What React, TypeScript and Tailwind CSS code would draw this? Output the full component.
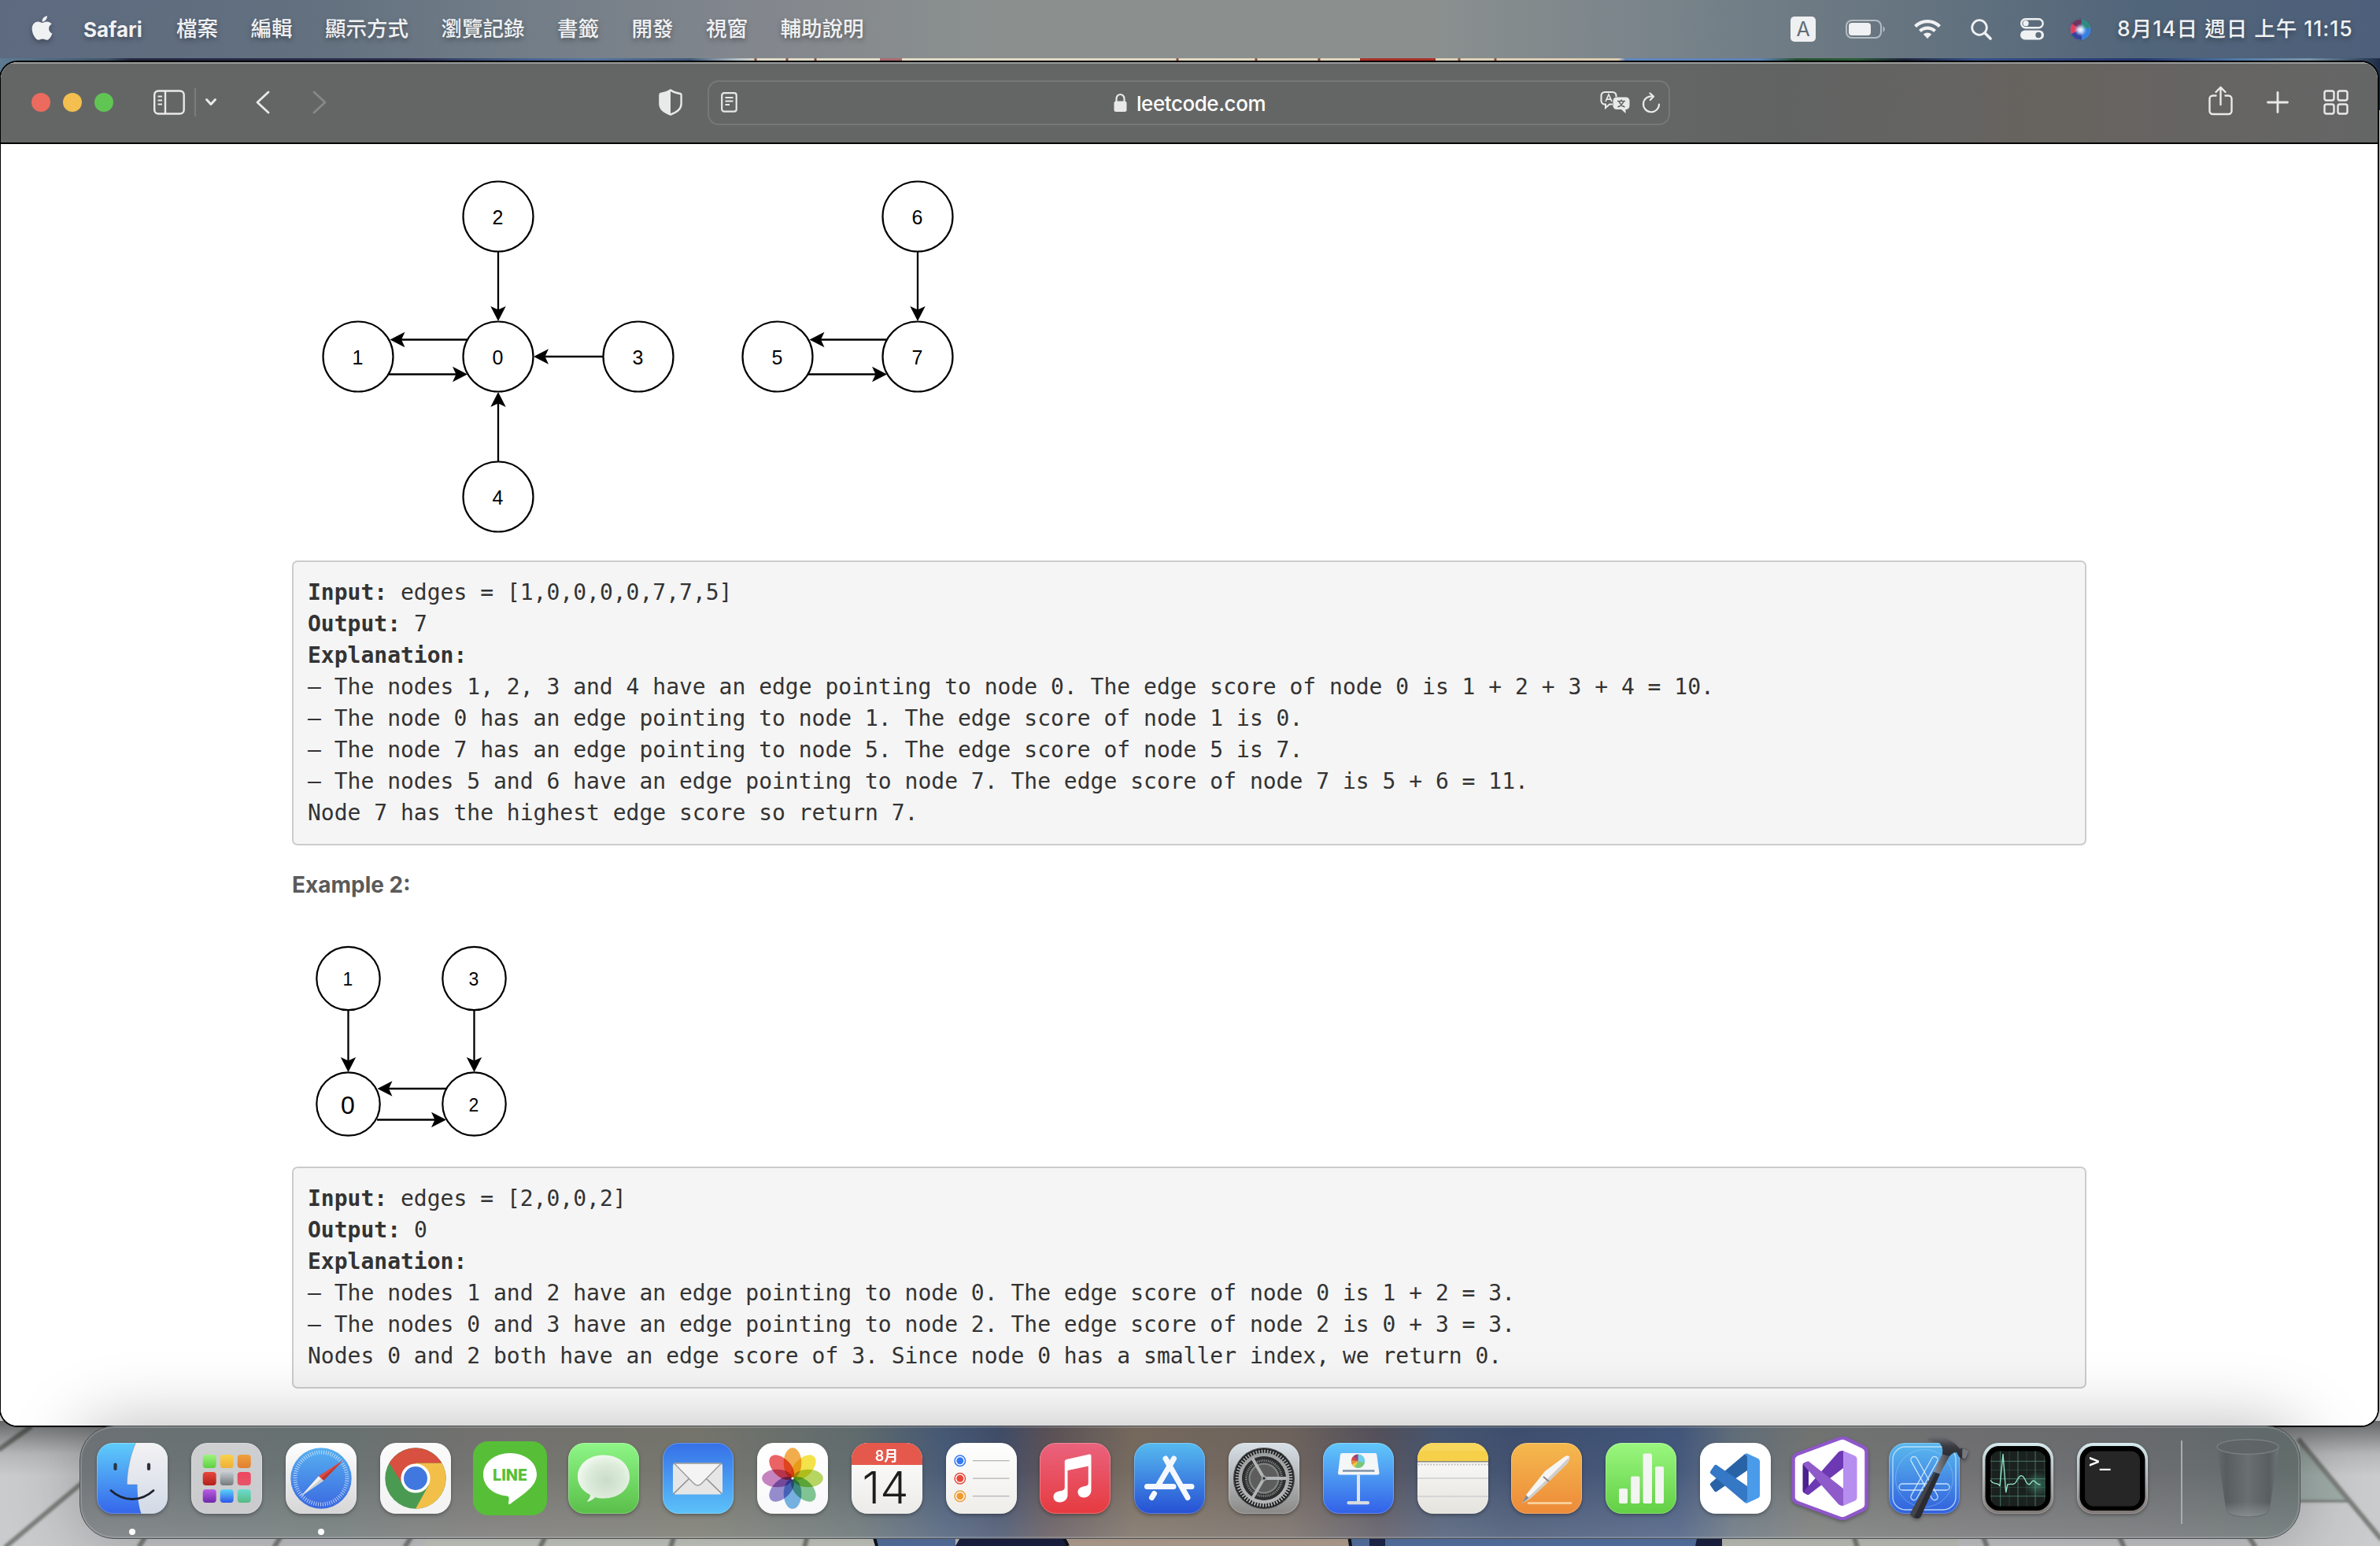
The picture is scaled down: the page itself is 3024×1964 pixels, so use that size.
import React from "react";
import { FaApple } from "react-icons/fa";

const UI = "font-['Inter','Noto_Sans_CJK_TC',sans-serif]";

/* ---------- Desktop wallpaper ---------- */

function Wallpaper() {
  return (
    <svg className="absolute inset-0 h-full w-full" viewBox="0 0 3024 1964" preserveAspectRatio="none">
      <defs>
        <linearGradient id="topStrip" x1="0" x2="1">
          <stop offset="0" stopColor="#5d7c93" />
          <stop offset="0.045" stopColor="#3f5468" />
          <stop offset="0.055" stopColor="#22263d" />
          <stop offset="0.17" stopColor="#2b2d4d" />
          <stop offset="0.22" stopColor="#46628f" />
          <stop offset="0.25" stopColor="#56759f" />
          <stop offset="0.29" stopColor="#3e5878" />
          <stop offset="0.31" stopColor="#b4c0c8" />
          <stop offset="0.32" stopColor="#e0dcc8" />
          <stop offset="0.56" stopColor="#e0d6bd" />
          <stop offset="0.68" stopColor="#dccab0" />
          <stop offset="0.683" stopColor="#5f86bd" />
          <stop offset="0.74" stopColor="#5c82b4" />
          <stop offset="0.755" stopColor="#25502f" />
          <stop offset="0.78" stopColor="#2a5c35" />
          <stop offset="0.8" stopColor="#1c2438" />
          <stop offset="0.83" stopColor="#34508a" />
          <stop offset="0.9" stopColor="#24366f" />
          <stop offset="0.94" stopColor="#5078a8" />
          <stop offset="0.97" stopColor="#7994a8" />
          <stop offset="1" stopColor="#1c2c44" />
        </linearGradient>
        <linearGradient id="cornerShade" x1="0" x2="0" y1="0" y2="1">
          <stop offset="0" stopColor="#000" stopOpacity="0.5" />
          <stop offset="0.6" stopColor="#000" stopOpacity="0.1" />
          <stop offset="1" stopColor="#000" stopOpacity="0" />
        </linearGradient>
        <filter id="soft"><feGaussianBlur stdDeviation="1.6" /></filter>
      </defs>
      <rect width="3024" height="140" fill="url(#topStrip)" />
      <rect x="1118" y="72" width="28" height="8" fill="#a86a70" />
      <rect x="1728" y="72" width="96" height="8" fill="#a93029" />
      <path d="M960 72v8M1000 72v8M1036 72v8M1496 72v8M1596 72v8M1676 72v8M1854 72v8M1900 72v8" stroke="#8a5548" strokeWidth="3" />
      <rect y="1750" width="3024" height="214" fill="#c9cbcd" />
      <rect y="1940" x="540" width="580" height="24" fill="#cdd0c8" />
      <path d="M2922 1830L2985 1908H2922Z" fill="#9fada9" />
      <rect x="2188" y="1940" width="300" height="24" fill="#c6c9c1" />
      <rect x="1112" y="1950" width="102" height="14" fill="#5b77a8" />
      <path d="M1214 1964L1222 1950H1348L1356 1964Z" fill="#1d2245" />
      <rect x="1356" y="1950" width="358" height="14" fill="#bda999" />
      <rect x="1714" y="1950" width="474" height="14" fill="#5a79ab" />
      <path d="M1110 1950L1114 1964M1350 1950L1357 1964M1714 1950L1716 1964" stroke="#10131f" strokeWidth="4" />
      <rect x="1740" y="1950" width="20" height="14" fill="#1f2850" />
      <path d="M2157 1950H2188V1964H2154Z" fill="#1d2347" />
      <g stroke="#7b7f7b" strokeWidth="6" fill="none" filter="url(#soft)">
        <path d="M40 1812L-2 1842" />
        <path d="M104 1884L6 1966" />
        <path d="M186 1950L176 1966M358 1950L348 1966M524 1950L514 1966M694 1950L686 1966M857 1950L852 1966M1026 1950L1022 1966" />
        <path d="M2355 1950L2360 1966M2519 1950L2525 1966M2692 1950L2699 1966M2856 1950L2866 1966" />
        <path d="M2920 1828L3026 1956" />
        <path d="M2920 1907H2984" strokeWidth="3" />
      </g>
      <rect y="1805" width="3024" height="70" fill="url(#cornerShade)" />
    </svg>
  );
}

/* ---------- Menu bar ---------- */

const MENUS = ["檔案", "編輯", "顯示方式", "瀏覽記錄", "書籤", "開發", "視窗", "輔助說明"];

function MenuBar() {
  return (
    <header
      className={`relative flex h-[74px] shrink-0 items-center justify-between pl-[40px] pr-[33px] text-[26.5px] font-medium text-[#f0f1f3] [text-shadow:0_3px_6px_rgba(0,0,0,0.35)] bg-[linear-gradient(90deg,#5d6a80_0%,#62707f_13%,#727d87_22%,#82868d_31%,#8b908f_42%,#8b908f_60%,#78838a_70%,#64737f_81%,#51657a_90%,#4d5f7a_100%)] ${UI}`}
    >
      <nav className="flex items-center">
        <FaApple className="-mt-1 h-[35px] w-[27px] drop-shadow-[0_3px_3px_rgba(0,0,0,0.3)]" />
        <span className="ml-[39px] w-[77px] text-[26px] font-bold">Safari</span>
        <div className="ml-[41px] flex gap-[41.5px]">
          {MENUS.map((m) => (
            <span key={m} className="-mt-px whitespace-nowrap">{m}</span>
          ))}
        </div>
      </nav>
      <div className="flex items-center">
        <span className="flex h-[32px] w-[32px] items-center justify-center rounded-[5px] bg-[#eff0f1] text-[25px] font-normal leading-none text-[#5d6d78] [text-shadow:none]">A</span>
        <svg className="ml-[38px] h-[26px] w-[52px]" viewBox="0 0 52 26">
          <rect x="1" y="2" width="44" height="22" rx="7" fill="none" stroke="#b5bcc2" strokeWidth="2" />
          <rect x="4" y="5" width="28" height="16" rx="4" fill="#f0f1f3" />
          <path d="M47.500 9.500c3 1 3 6 0 7z" fill="#b5bcc2" />
        </svg>
        <svg className="ml-[35px] h-[26px] w-[34px]" viewBox="0 0 34 26" fill="none" stroke="#f0f1f3" strokeWidth="4.200">
          <path d="M1.500 9.500a22 22 0 0 1 31 0" />
          <path d="M7.500 15.500a13.500 13.500 0 0 1 19 0" />
          <path d="M17 25l-5.200-5.400a7.500 7.500 0 0 1 10.400 0z" fill="#f0f1f3" stroke="none" />
        </svg>
        <svg className="ml-[38px] h-[27px] w-[27px]" viewBox="0 0 27 27" fill="none" stroke="#f0f1f3" strokeLinecap="round">
          <circle cx="11" cy="11" r="9.300" strokeWidth="2.800" />
          <path d="M18 18l7 7" strokeWidth="3.600" />
        </svg>
        <svg className="ml-[36px] h-[28px] w-[30px]" viewBox="0 0 30 28">
          <rect x="1.200" y="1.200" width="27.500" height="11" rx="5.500" fill="none" stroke="#f0f1f3" strokeWidth="2.400" />
          <circle cx="7" cy="6.700" r="3.600" fill="#f0f1f3" />
          <rect x="0" y="15.500" width="30" height="12" rx="6" fill="#f0f1f3" />
          <circle cx="23" cy="21.500" r="3.700" fill="#5d6e7c" />
        </svg>
        <svg className="ml-[32px] h-[29px] w-[29px]" viewBox="0 0 29 29">
          <defs>
            <radialGradient id="siriCore"><stop offset="0" stopColor="#fff" /><stop offset="0.45" stopColor="#cfe6ff" stopOpacity="0.8" /><stop offset="1" stopColor="#8fb8ff" stopOpacity="0" /></radialGradient>
            <clipPath id="siriClip"><circle cx="14.500" cy="14.500" r="13.500" /></clipPath>
          </defs>
          <circle cx="14.500" cy="14.500" r="14" fill="#323a58" />
          <g clipPath="url(#siriClip)">
            <path d="M14.500 14.500L0 4V24Z" fill="#e0405f" />
            <path d="M14.500 14.500L0 4Q10 -4 18 2Z" fill="#6f3460" />
            <path d="M14.500 14.500L16 0Q30 6 28 15Z" fill="#2f8a80" />
            <path d="M14.500 14.500L29 12Q28 26 16 29Z" fill="#3a7fe0" />
            <path d="M14.500 14.500L16 29Q4 28 1 21Z" fill="#35439c" />
          </g>
          <circle cx="14.500" cy="15" r="8" fill="url(#siriCore)" />
          <circle cx="14.500" cy="14.500" r="13.500" fill="none" stroke="#59788d" strokeWidth="1" />
        </svg>
        <span className="-mt-px ml-[32px] w-[301px] whitespace-nowrap text-[26.5px] tracking-[1px]">8月14日 週日 上午 11:15</span>
      </div>
    </header>
  );
}

/* ---------- Safari toolbar ---------- */

function Toolbar() {
  return (
    <div className="flex h-[104px] shrink-0 items-center border-b-2 border-b-black border-t-2 border-t-[#999b9a] bg-[linear-gradient(90deg,#646665_0%,#646665_70%,#616362_75%,#656462_82%,#67635e_86%,#666463_92%,#646665_100%)] pb-[2px] pl-[39px] pr-[37px] text-[#e8e9e8]">
      <div className="flex gap-4">
        <span className="h-6 w-6 rounded-full bg-[#ed6a5e]" />
        <span className="h-6 w-6 rounded-full bg-[#f4bf4f]" />
        <span className="h-6 w-6 rounded-full bg-[#61c554]" />
      </div>
      <svg className="ml-[51px] h-[32px] w-[40px]" viewBox="0 0 40 32" fill="none" stroke="currentColor" strokeWidth="2.400">
        <rect x="1.200" y="1.500" width="37.500" height="29" rx="5" />
        <path d="M15 1.500v29" />
        <path d="M5.500 8.500h5.500M5.500 13.500h5.500M5.500 18.500h5.500" strokeWidth="2" />
      </svg>
      <span className="ml-[12px] h-[36px] w-[2px] bg-[#7b7d7c]" />
      <svg className="ml-[11px] h-[12px] w-[16px]" viewBox="0 0 16 12" fill="none" stroke="currentColor" strokeWidth="3" strokeLinecap="round" strokeLinejoin="round">
        <path d="M2.500 2.500L8 8.500L13.500 2.500" />
      </svg>
      <svg className="ml-[49px] h-[30px] w-[18px]" viewBox="0 0 18 30" fill="none" stroke="currentColor" strokeWidth="2.800" strokeLinecap="round" strokeLinejoin="round">
        <path d="M16 2L2 15L16 28" />
      </svg>
      <svg className="ml-[54px] h-[30px] w-[18px]" viewBox="0 0 18 30" fill="none" stroke="#878988" strokeWidth="2.800" strokeLinecap="round" strokeLinejoin="round">
        <path d="M2 2L16 15L2 28" />
      </svg>
      <svg className="ml-[422px] h-[34px] w-[30px]" viewBox="0 0 30 34">
        <path d="M15 1.500C10 5 6 5.500 2.500 6C1.500 6.300 1.400 7 1.400 8V19C1.400 26 8 30 15 32.500C22 30 28.600 26 28.600 19V8C28.600 7 28.500 6.300 27.500 6C24 5.500 20 5 15 1.500Z" fill="none" stroke="currentColor" strokeWidth="2.400" />
        <path d="M15 1.500C10 5 6 5.500 2.500 6L1.400 8V19C1.400 26 8 30 15 32.500Z" fill="currentColor" />
      </svg>
      <div className="ml-[32px] flex h-[57px] w-[1223px] items-center rounded-[14px] border-2 border-[#767877] pl-[15px] pr-[10px]">
        <svg className="h-[26px] w-[21px]" viewBox="0 0 21 26" fill="none" stroke="currentColor">
          <rect x="1.200" y="1.200" width="18.500" height="23.500" rx="3" strokeWidth="2.200" />
          <path d="M5.500 7h10M5.500 11.500h10M5.500 16h5.500" strokeWidth="1.900" />
        </svg>
        <div className="ml-[478px] flex items-center">
          <svg className="h-[25px] w-[17px]" viewBox="0 0 17 25">
            <rect x="0.500" y="10.500" width="16" height="13.500" rx="2.500" fill="currentColor" />
            <path d="M3.500 12V7.500a5 5.500 0 0 1 10 0V12" fill="none" stroke="currentColor" strokeWidth="2.200" />
          </svg>
          <span className="ml-[12px] mt-[3px] text-[26px] font-medium leading-none tracking-[-0.45px] text-white font-['Inter',sans-serif]">leetcode.com</span>
        </div>
        <div className="ml-auto flex items-center">
          <svg className="h-[30px] w-[38px]" viewBox="0 0 38 30">
            <path d="M6 2H16a4.500 4.500 0 0 1 4.500 4.500V8M6 2A4.500 4.500 0 0 0 1.500 6.500V13A4.500 4.500 0 0 0 6 17.500H7V22L12 17.500H16" fill="none" stroke="currentColor" strokeWidth="2.100" />
            <path d="M7 14L11 5L15 14M8.500 11.200H13.500" fill="none" stroke="currentColor" strokeWidth="1.700" />
            <path d="M21 8.500H33a4.500 4.500 0 0 1 4.500 4.500V19.500A4.500 4.500 0 0 1 33 24H32.500V29L27 24H21a4.500 4.500 0 0 1-4.500-4.500V13A4.500 4.500 0 0 1 21 8.500Z" fill="currentColor" />
            <path d="M22 13.500H32M27 11.500V13.500M24 13.500Q26 19 31.500 21M30 13.500Q28 19 22.500 21" fill="none" stroke="#646665" strokeWidth="1.700" />
          </svg>
          <svg className="ml-[15px] h-[27px] w-[24px]" viewBox="0 0 24 27" fill="none" stroke="currentColor" strokeWidth="2.200" strokeLinecap="round" strokeLinejoin="round">
            <path d="M14 5.500A10 10 0 1 0 22 15.500" />
            <path d="M10.500 1.500L15 5.600L10.800 10" />
          </svg>
        </div>
      </div>
      <div className="ml-auto flex items-center">
        <svg className="-mt-1 h-[38px] w-[31px]" viewBox="0 0 31 38" fill="none" stroke="currentColor" strokeWidth="2.400" strokeLinecap="round" strokeLinejoin="round">
          <path d="M9.500 12.500H5.500A4 4 0 0 0 1.500 16.500V32A4 4 0 0 0 5.500 36H25.500A4 4 0 0 0 29.500 32V16.500A4 4 0 0 0 25.500 12.500H21.500" />
          <path d="M15.500 24V2M9.500 8L15.500 1.800L21.500 8" />
        </svg>
        <svg className="ml-[43px] h-[28px] w-[28px]" viewBox="0 0 28 28" fill="none" stroke="currentColor" strokeWidth="2.800" strokeLinecap="round">
          <path d="M14 1.500V26.500M1.500 14H26.500" />
        </svg>
        <svg className="ml-[44px] h-[32px] w-[32px]" viewBox="0 0 32 32" fill="none" stroke="currentColor" strokeWidth="2.400">
          <rect x="1.500" y="1.500" width="12" height="12" rx="2.500" />
          <rect x="18.500" y="1.500" width="12" height="12" rx="2.500" />
          <rect x="1.500" y="18.500" width="12" height="12" rx="2.500" />
          <rect x="18.500" y="18.500" width="12" height="12" rx="2.500" />
        </svg>
      </div>
    </div>
  );
}

/* ---------- Graph diagrams ---------- */

type GraphNode = { id: string; x: number; y: number; size?: number };
type Edge = [number, number, number, number];

function Arrow({ e }: { e: Edge }) {
  const [x1, y1, x2, y2] = e;
  const angle = (Math.atan2(y2 - y1, x2 - x1) * 180) / Math.PI;
  return (
    <g>
      <line x1={x1} y1={y1} x2={x2 - Math.sign(x2 - x1) * 8} y2={y2 - Math.sign(y2 - y1) * 8} stroke="#000" strokeWidth="2.300" />
      <path d="M0 0L-19 -9.700L-14.500 0L-19 9.700Z" transform={`translate(${x2} ${y2}) rotate(${angle})`} />
    </g>
  );
}

function Graph({ width, height, r, font, nodes, edges, className }: { width: number; height: number; r: number; font: number; nodes: GraphNode[]; edges: Edge[]; className: string }) {
  return (
    <svg className={className} width={width} height={height} viewBox={`0 0 ${width} ${height}`}>
      {nodes.map((n) => (
        <g key={n.id}>
          <circle cx={n.x} cy={n.y} r={r} fill="#fff" stroke="#000" strokeWidth="2.200" />
          <text x={n.x - 0.5} y={n.y + (n.size ? 12 : font * 0.41)} textAnchor="middle" fontFamily="Liberation Sans, sans-serif" fontSize={n.size ?? font}>
            {n.id}
          </text>
        </g>
      ))}
      {edges.map((e, i) => (
        <Arrow key={i} e={e} />
      ))}
    </svg>
  );
}

const GRAPH_ONE: GraphNode[] = [
  { id: "2", x: 260, y: 90 },
  { id: "1", x: 82, y: 268 },
  { id: "0", x: 260, y: 268 },
  { id: "3", x: 438, y: 268 },
  { id: "4", x: 260, y: 446 },
  { id: "6", x: 793, y: 90 },
  { id: "5", x: 615, y: 268 },
  { id: "7", x: 793, y: 268 },
];
const EDGES_ONE: Edge[] = [
  [260, 135, 260, 223],
  [221, 246.500, 122.500, 246.500],
  [121, 290.500, 221, 290.500],
  [393, 268, 305, 268],
  [260, 401, 260, 313],
  [793, 135, 793, 223],
  [754, 246.500, 655.500, 246.500],
  [654, 290.500, 754, 290.500],
];
const GRAPH_TWO: GraphNode[] = [
  { id: "1", x: 69.500, y: 58 },
  { id: "3", x: 229.500, y: 58 },
  { id: "0", x: 69.500, y: 217.500, size: 32 },
  { id: "2", x: 229.500, y: 217.500 },
];
const EDGES_TWO: Edge[] = [
  [69.500, 98, 69.500, 177],
  [229.500, 98, 229.500, 177],
  [194, 198, 106.500, 198],
  [106, 237.500, 194, 237.500],
];

/* ---------- Problem statement ---------- */

function Sample({ input, output, lines }: { input: string; output: string; lines: string[] }) {
  return (
    <div className="rounded-[7px] border-2 border-[#cccccc] bg-[#f5f5f5] px-[18px] py-[19px] text-[28px] leading-[40px] text-[#333333] font-['DejaVu_Sans_Mono',monospace]">
      <div><b>Input:</b> {input}</div>
      <div><b>Output:</b> {output}</div>
      <div><b>Explanation:</b></div>
      {lines.map((l) => (
        <div key={l} className="whitespace-pre">{l}</div>
      ))}
    </div>
  );
}

function Page() {
  return (
    <main className="flex flex-1 flex-col bg-white pl-[370px] pr-[370px] pt-[1.5px]">
      <Graph className="ml-[1.5px] shrink-0" width={860} height={527} r={44.500} font={25} nodes={GRAPH_ONE} edges={EDGES_ONE} />
      <Sample
        input="edges = [1,0,0,0,0,7,7,5]"
        output="7"
        lines={[
          "– The nodes 1, 2, 3 and 4 have an edge pointing to node 0. The edge score of node 0 is 1 + 2 + 3 + 4 = 10.",
          "– The node 0 has an edge pointing to node 1. The edge score of node 1 is 0.",
          "– The node 7 has an edge pointing to node 5. The edge score of node 5 is 7.",
          "– The nodes 5 and 6 have an edge pointing to node 7. The edge score of node 7 is 5 + 6 = 11.",
          "Node 7 has the highest edge score so return 7.",
        ]}
      />
      <h3 className="mt-[30px] h-[40px] text-[28px] font-bold leading-[40px] text-[#5a5a5a] font-['Inter',sans-serif]">Example 2:</h3>
      <Graph className="ml-[1.5px] mt-[41px] shrink-0" width={300} height={297} r={40.200} font={23} nodes={GRAPH_TWO} edges={EDGES_TWO} />
      <Sample
        input="edges = [2,0,0,2]"
        output="0"
        lines={[
          "– The nodes 1 and 2 have an edge pointing to node 0. The edge score of node 0 is 1 + 2 = 3.",
          "– The nodes 0 and 3 have an edge pointing to node 2. The edge score of node 2 is 0 + 3 = 3.",
          "Nodes 0 and 2 both have an edge score of 3. Since node 0 has a smaller index, we return 0.",
        ]}
      />
    </main>
  );
}

/* ---------- Dock icons ---------- */

function Tile({ id, from, to, stroke, children }: { id: string; from: string; to: string; stroke?: string; children?: React.ReactNode }) {
  return (
    <svg className="h-[90px] w-[90px] overflow-visible drop-shadow-[0_2px_2px_rgba(0,0,0,0.3)]" viewBox="0 0 90 90">
      <defs>
        <linearGradient id={`${id}-bg`} x1="0" x2="0" y1="0" y2="1">
          <stop offset="0" stopColor={from} />
          <stop offset="1" stopColor={to} />
        </linearGradient>
        <clipPath id={`${id}-clip`}>
          <rect width="90" height="90" rx="20.500" />
        </clipPath>
      </defs>
      <rect width="90" height="90" rx="20.500" fill={`url(#${id}-bg)`} />
      <rect x="0.500" y="0.500" width="89" height="89" rx="20" fill="none" stroke={stroke ?? "#ffffff"} strokeOpacity="0.250" />
      {children}
    </svg>
  );
}

const Finder = () => (
  <Tile id="finder" from="#5fcdfb" to="#3565ea">
    <defs>
      <linearGradient id="finder-r" x1="0" x2="0" y1="0" y2="1"><stop offset="0" stopColor="#f3f2f4" /><stop offset="1" stopColor="#d2dae6" /></linearGradient>
    </defs>
    <path clipPath="url(#finder-clip)" d="M49.500 0C43 14 38.500 36 38.300 51.500Q38.300 53 40 53H51.500C51.500 66 53 80 56.500 90H90V0Z" fill="url(#finder-r)" />
    <path d="M51.500 53H40Q38.300 53 38.300 51.500C38.500 36 43 14 49.500 0" fill="none" stroke="#555f70" strokeOpacity="0.400" strokeWidth="0.800" />
    <path d="M23.500 27.500V33M66 27.500V33" stroke="#2c333f" strokeWidth="4.200" strokeLinecap="round" />
    <path d="M18 60.500Q30 71.500 45 71.500T72 60.500" fill="none" stroke="#1c2230" strokeWidth="2.800" strokeLinecap="round" />
  </Tile>
);

const LAUNCH = [["#9df57c", "#5ed043"], ["#f8d24b", "#eeb03a"], ["#efa03c", "#e07f33"], ["#e9463b", "#b0201b"], ["#c3cacf", "#757a7c"], ["#ee4660", "#e6566a"], ["#b95fe6", "#7029a8"], ["#5ad5fb", "#2f55e8"], ["#6bddd0", "#58b982"]];
const Launchpad = () => (
  <Tile id="launch" from="#cdcfd1" to="#cbcbcd">
    {LAUNCH.map(([a, b], i) => (
      <g key={i}>
        <defs><linearGradient id={`lp${i}`} x1="0" x2="0" y1="0" y2="1"><stop offset="0" stopColor={a} /><stop offset="1" stopColor={b} /></linearGradient></defs>
        <rect x={14.700 + (i % 3) * 22} y={15 + Math.floor(i / 3) * 22} width="17" height="17" rx="4" fill={`url(#lp${i})`} />
      </g>
    ))}
  </Tile>
);

const Safari = () => (
  <Tile id="safari" from="#ffffff" to="#d6d6d6">
    <defs><linearGradient id="saf" x1="0" x2="0" y1="0" y2="1"><stop offset="0" stopColor="#57b0f0" /><stop offset="1" stopColor="#3b68e0" /></linearGradient></defs>
    <circle cx="45" cy="45" r="38.700" fill="url(#saf)" />
    <circle cx="45" cy="45" r="33" fill="none" stroke="#e6f1fc" strokeOpacity="0.800" strokeWidth="5" strokeDasharray="0.900 1.980" />
    <path d="M73 22L41.800 42.300L48 48Z" fill="#df4a3e" />
    <path d="M73 22L45 45.200L48 48Z" fill="#b93832" />
    <path d="M19 68L41.800 42.300L48 48Z" fill="#f4f4f4" />
    <path d="M19 68L45 45.200L48 48Z" fill="#cfcfd1" />
  </Tile>
);

const Chrome = () => (
  <Tile id="chrome" from="#fbfbfb" to="#f2f2f2">
    <circle cx="45" cy="45" r="38.700" fill="#4a9a52" />
    <path d="M11.600 25.700A38.700 38.700 0 0 1 78.400 25.700H45L29.400 54Z" fill="#d8503f" />
    <path d="M78.400 25.700A38.700 38.700 0 0 1 45 83.700L61.500 54L45 25.700Z" fill="#f2bf49" />
    <circle cx="45" cy="45" r="18.600" fill="#fff" />
    <circle cx="45" cy="45" r="15" fill="#4078e0" />
  </Tile>
);

const Line = () => (
  <svg className="h-[94px] w-[94px]" viewBox="0 0 94 94">
    <rect width="94" height="94" rx="19" fill="#57bf37" />
    <path d="M47 15C66 15 81 26.500 81 42C81 58 61 69 47.500 79.500C45 81 44.500 79 45.500 75C46 71.500 45.500 70 43 69.600C25 67.500 13 57 13 42C13 26.500 28 15 47 15Z" fill="#fff" />
    <text x="47" y="50" textAnchor="middle" textLength="44" lengthAdjust="spacingAndGlyphs" fontFamily="Inter, sans-serif" fontWeight="800" fontSize="19.500" fill="#57bf37">LINE</text>
  </svg>
);

const Messages = () => (
  <Tile id="msg" from="#8ef687" to="#5abf49">
    <defs><radialGradient id="msgb" cx="0.550" cy="0.550" r="0.600"><stop offset="0" stopColor="#cbdcc9" /><stop offset="0.600" stopColor="#dcebda" /><stop offset="1" stopColor="#f4fbf3" /></radialGradient></defs>
    <path d="M45 15.500C64 15.500 78 27 78 43C78 59 64 70.500 45 70.500C41 70.500 37.500 70 34.500 69C31 72.500 27 74.500 23.500 74.500C26.500 72 28 69 28 66C18 61 12 53 12 43C12 27 26 15.500 45 15.500Z" fill="url(#msgb)" />
  </Tile>
);

const Mail = () => (
  <Tile id="mail" from="#3570e8" to="#5cc2f9">
    <rect x="13" y="25.500" width="63" height="40" rx="4" fill="#e6e6e7" />
    <path d="M14 64.500L35 44M75 64.500L54 44" stroke="#8d8d8f" strokeWidth="1.500" />
    <path d="M14.500 26H74.500L50 51Q44.500 57 39 51Z" fill="#f4f4f5" stroke="#98989a" strokeWidth="1.300" />
  </Tile>
);

const PETALS = ["#ef9f2d", "#f1dd2a", "#a9ce45", "#69ba7f", "#5fa3dc", "#8278c6", "#bb6eb4", "#e8484a"];
const Photos = () => (
  <Tile id="photos" from="#ffffff" to="#f8f8fa">
    <g className="isolate">
      {PETALS.map((c, i) => (
        <ellipse key={c} className="mix-blend-multiply" cx="45" cy="25.500" rx="11.300" ry="19.300" fill={c} fillOpacity="0.850" transform={`rotate(${i * 45} 45 45)`} />
      ))}
    </g>
    <circle cx="45" cy="45" r="1.600" fill="#fff" />
  </Tile>
);

const Calendar = () => (
  <Tile id="cal" from="#ffffff" to="#ecebe8">
    <rect width="90" height="28" fill="#e4594c" clipPath="url(#cal-clip)" />
    <text x="44.500" y="23" textAnchor="middle" fontFamily="Inter, Noto Sans CJK TC, sans-serif" fontWeight="600" fontSize="18" fill="#fff">8月</text>
    <text x="13.500" y="76.500" textLength="59" lengthAdjust="spacingAndGlyphs" fontFamily="Inter, sans-serif" fontWeight="300" fontSize="55.500" fill="#1d1d1d">14</text>
  </Tile>
);

const Reminders = () => (
  <Tile id="rem" from="#ffffff" to="#eeede9">
    {["#3478f6", "#e8493d", "#ee9a31"].map((c, i) => (
      <g key={c}>
        <circle cx="17.800" cy={22.700 + i * 22.500} r="6.700" fill="#fff" stroke={c} strokeWidth="1.500" />
        <circle cx="17.800" cy={22.700 + i * 22.500} r="4.500" fill={c} />
        <path d={`M34 ${22.700 + i * 22.500}H80.500`} stroke="#b3b2b6" strokeWidth="1.300" />
      </g>
    ))}
  </Tile>
);

const Music = () => (
  <Tile id="music" from="#ea637d" to="#e63a40">
    <path d="M31.800 23.500Q31.800 21.500 34 21L63 14.500Q65.500 14 65.500 16.500V60C65.500 65.500 61.500 69.500 56 69.500C51.500 69.500 48.500 66.500 48.500 62.500C48.500 58.500 51.500 56.500 55 55.500L59.500 54.500Q61.800 53.800 61.800 51.500V29.500L35.500 35V66.500C35.500 71.500 31 75.500 25.500 75.500C20.500 75.500 17.500 72.500 17.500 68.500C17.500 65 20 62.500 24 61.500L29 60.500Q31.800 59.500 31.800 57Z" fill="#fff" />
  </Tile>
);

const AppStore = () => (
  <Tile id="store" from="#57bbf0" to="#2650d4">
    <g stroke="#f5f9ff" strokeWidth="7" strokeLinecap="round">
      <path d="M16.500 55.500H50M63 55.500H73" />
      <path d="M40 20L68 69.500" />
      <path d="M50.500 20L30.500 54" fill="none" />
      <path d="M25.500 64.500L22.500 69.500" />
    </g>
  </Tile>
);

const Settings = () => (
  <Tile id="settings" from="#d9e1e8" to="#8a8987">
    <defs>
      <linearGradient id="gear" x1="0" x2="0" y1="0" y2="1"><stop offset="0" stopColor="#9da1a2" /><stop offset="1" stopColor="#b4b7b7" /></linearGradient>
    </defs>
    <circle cx="45" cy="45" r="39" fill="#1b1c1d" />
    <circle cx="45" cy="45" r="38.300" fill="none" stroke="#b9bcbb" strokeOpacity="0.350" strokeWidth="1" />
    <circle cx="45" cy="45" r="34.200" fill="none" stroke="url(#gear)" strokeWidth="4.500" strokeDasharray="1.800 1.780" />
    <circle cx="45" cy="45" r="30" fill="none" stroke="url(#gear)" strokeWidth="4.500" />
    <circle cx="45" cy="45" r="27.800" fill="#2e2f2f" />
    <circle cx="45" cy="45" r="22.500" fill="none" stroke="#8b8f8f" strokeWidth="3" strokeDasharray="1.100 1.250" />
    <circle cx="45" cy="45" r="19.800" fill="#7f8282" />
    <circle cx="45" cy="45" r="17.300" fill="#5c5d5c" />
    <path d="M45 45H74M45 45L30.500 20M45 45L30.500 70" stroke="#b2b6b6" strokeWidth="3.800" />
    <circle cx="45" cy="45" r="3.400" fill="#9b9fa0" />
    <circle cx="45" cy="45" r="1.500" fill="#202122" />
  </Tile>
);

const Keynote = () => (
  <Tile id="keynote" from="#62c8fa" to="#3260e8">
    <path d="M24 13H66.500Q68 13 68.300 14.500L71.500 38.500Q71.500 40.500 69.500 40.500H21Q18.700 40.500 19 38.500L22 14.500Q22.200 13 24 13Z" fill="#f4f6f8" />
    <path d="M25 35.500H65.500" stroke="#7e93a8" strokeWidth="2.400" />
    <circle cx="44.500" cy="23.300" r="8.700" fill="#7bc67a" />
    <path d="M44.500 23.300V14.600A8.700 8.700 0 0 1 53 25Z" fill="#6fcdf2" />
    <path d="M44.500 23.300V14.600A8.700 8.700 0 0 0 38.500 17Z" fill="#9a3f86" />
    <path d="M44.500 23.300L38.500 17A8.700 8.700 0 0 0 35.900 22.300Z" fill="#d8434a" />
    <path d="M44.500 23.300L35.900 22.300A8.700 8.700 0 0 0 37 27.600Z" fill="#ee8b3d" />
    <path d="M44.500 23.300L37 27.600A8.700 8.700 0 0 0 40.500 31Z" fill="#f0c64b" />
    <rect x="43" y="40.500" width="4" height="34" fill="#dfe4ea" />
    <rect x="30.500" y="74" width="28.500" height="4.300" rx="2" fill="#d6dae0" />
  </Tile>
);

const Notes = () => (
  <Tile id="notes" from="#ffffff" to="#e4e3dd">
    <g clipPath="url(#notes-clip)">
      <rect width="90" height="23" fill="#f7d04a" />
      <rect width="90" height="10" fill="#f9dc6a" opacity="0.600" />
      <rect y="23" width="90" height="1.600" fill="#8f8a78" />
      <path d="M1 27.500H90" stroke="#bdbcb8" strokeWidth="2.200" strokeDasharray="1.800 2" />
      <path d="M0 45H90M0 68H90" stroke="#cfced0" strokeWidth="1.600" />
    </g>
  </Tile>
);

const Pages = () => (
  <Tile id="pages" from="#f5b94e" to="#ed8a39">
    <path d="M22 76.500H76" stroke="#fbd9a6" strokeWidth="2.600" strokeLinecap="round" />
    <path d="M14 76.500L19 66L43 36L66.500 18.500Q72 14.500 74 17.500Q75 20.500 71 26.500L50 47L24 71Z" fill="#f6f5f4" />
    <path d="M14 76.500L24 71L50 47L71 26.500Q74 22 74 18L47 45Z" fill="#cfccca" />
    <path d="M41 43L48 49" stroke="#87827f" strokeWidth="1.800" />
    <path d="M14 76.500L19 66L22.500 70Z" fill="#8d8884" />
  </Tile>
);

const Numbers = () => (
  <Tile id="numbers" from="#9af77f" to="#62cf45">
    <g fill="#f2f5f1">
      <rect x="17" y="58" width="11" height="19" rx="2" />
      <rect x="32" y="42.500" width="11.500" height="34.500" rx="2" />
      <rect x="47.500" y="13.500" width="11.500" height="63.500" rx="2" />
      <rect x="63" y="30" width="11" height="47" rx="2" />
    </g>
  </Tile>
);

const VSCode = () => (
  <Tile id="vsc" from="#ffffff" to="#ffffff">
    <path d="M13.500 54.500Q12 52.500 13.500 51L56 15L60 13.500V35L21 62Q19.500 63 18 61Z" fill="#2863a6" />
    <path d="M13.500 35.500Q12 37.500 13.500 39L56 75L60 76.500V55L21 28Q19.500 27 18 29Z" fill="#3478c6" />
    <path d="M60 13.500L74 20Q76 21 76 23.500V66.500Q76 69 74 70L60 76.500Q58 77 56 75.500Q60 75 60 71V19Q60 15 56 14.500Q58 13 60 13.500Z" fill="#4a9bea" />
  </Tile>
);

const VisualStudio = () => (
  <svg className="h-[106px] w-[98px] drop-shadow-[0_2px_2px_rgba(0,0,0,0.3)]" viewBox="0 0 98 106">
    <path d="M61 2.500Q65 0.500 69 2.500L91 13Q95.500 15.500 95.500 20V86Q95.500 90.500 91 93L69 103.500Q65 105.500 61 103.500L7 83.500Q2.500 81 2.500 77V29Q2.500 25 7 22.500Z" fill="#fff" stroke="#8e57c9" strokeWidth="4.500" />
    <path d="M14.500 36Q14.500 34 17 33L22 31.500V74L17 72Q14.500 71 14.500 69Z" fill="#4b2290" />
    <path d="M22 74Q19 74.500 15.500 70L60 19.500Q62 17.500 66 18V40Z" fill="#6d38b3" />
    <path d="M22 31.500Q18 31.500 15 35.500L60 86Q62 88 66 88V66Z" fill="#8f5aca" />
    <path d="M66 18L81 24.500Q83.500 26 83.500 28.500V77.500Q83.500 80 81 81.500L66 88Z" fill="#b68ef0" />
  </svg>
);

const Xcode = () => (
  <Tile id="xcode" from="#5ab9ee" to="#3160dd">
    <defs>
      <linearGradient id="hammerHead" x1="0" x2="0" y1="0" y2="1"><stop offset="0" stopColor="#6b6c72" /><stop offset="0.400" stopColor="#3b3c42" /><stop offset="1" stopColor="#24252a" /></linearGradient>
      <linearGradient id="hammerNeck" x1="0" x2="1"><stop offset="0" stopColor="#8b8c91" /><stop offset="1" stopColor="#46474d" /></linearGradient>
    </defs>
    <rect x="5" y="5" width="80" height="80" rx="16" fill="none" stroke="#cbe6fb" strokeOpacity="0.850" strokeWidth="1.300" />
    <circle cx="45" cy="45" r="36.500" fill="none" stroke="#bfe0fa" strokeOpacity="0.350" />
    <g fill="none" stroke="#d6ecfc" strokeWidth="1.300" strokeOpacity="0.900">
      <rect x="13" y="52" width="64" height="8" rx="4" />
      <rect x="41" y="14" width="8" height="62" rx="4" transform="rotate(29 45 45)" />
      <rect x="41" y="14" width="8" height="62" rx="4" transform="rotate(-29 45 45)" />
    </g>
    <path d="M68 14L77 17L65 39L57 37Z" fill="url(#hammerNeck)" />
    <path d="M57 37L65 39.500L41 93Q38.500 97.500 33 95.500Q26 93 28 88Z" fill="#2b2c32" />
    <path d="M57 37L59.500 38L32 94.500Q26 92.500 28 88Z" fill="#44454c" />
    <path d="M50 -5Q57 -8 66 -7Q79 -5 88 5L90 7.500L93 6.500L101 9.500Q102 11 97.500 21Q96 22 89 17.500L86 12Q81 12 77 17L68 14.500Q70 3 61 -2Q56 -4.500 50 -4Z" fill="url(#hammerHead)" />
    <path d="M93.500 7L101 9.800Q101.500 12 97 21L93 19Z" fill="#77787e" />
  </Tile>
);

const Bezel = ({ id, screen, children }: { id: string; screen: string; children: React.ReactNode }) => (
  <Tile id={id} from="#d5eaee" to="#7d7573">
    <rect x="3.500" y="4" width="83" height="82" rx="17.500" fill="#000" />
    <rect x="10" y="10.500" width="70" height="70" rx="11.500" fill={screen} />
    {children}
  </Tile>
);

const Activity = () => (
  <Bezel id="activity" screen="#1b211f">
    <defs>
      <radialGradient id="pulseGlow"><stop offset="0" stopColor="#4fa98a" stopOpacity="0.550" /><stop offset="1" stopColor="#4fa98a" stopOpacity="0" /></radialGradient>
      <clipPath id="pulseClip"><rect x="10" y="10.500" width="70" height="70" rx="11.500" /></clipPath>
    </defs>
    <g clipPath="url(#pulseClip)">
      <path d="M11.500 10V81M34 10V81M56 10V81M78.500 10V81M10 34.500H80M10 56.500H80" stroke="#3f7263" strokeOpacity="0.350" />
      <path d="M22.700 10V81M45 10V81M67 10V81M10 23.300H80M10 45.700H80M10 67.700H80" stroke="#4d8474" strokeOpacity="0.850" />
      <circle cx="70" cy="53" r="17" fill="url(#pulseGlow)" />
      <path d="M10 47Q12 51 16 51.500Q21 52 22 55L26 14L29.700 63L31.700 53Q34 52 38 52.500C44 53 44 41.700 49.300 41.700C54.500 41.700 54 52.700 59 52.700C62 52.700 62 48 64.500 48C67.500 48 67.500 53 73.500 53" fill="none" stroke="#8fe0c6" strokeWidth="1.400" />
    </g>
  </Bezel>
);

const Terminal = () => (
  <Bezel id="terminal" screen="#262626">
    <text x="15" y="31" fontFamily="DejaVu Sans Mono, monospace" fontWeight="700" fontSize="23" fill="#fff">
      {">"}
      <tspan dy="-1">_</tspan>
    </text>
  </Bezel>
);

const Trash = () => (
  <svg className="h-[100px] w-[80px]" viewBox="0 0 80 100">
    <defs>
      <linearGradient id="bin" x1="0" x2="1"><stop offset="0" stopColor="#666b6e" /><stop offset="0.150" stopColor="#585d60" /><stop offset="0.500" stopColor="#6a6f72" /><stop offset="0.850" stopColor="#595e61" /><stop offset="1" stopColor="#70767a" /></linearGradient>
      <linearGradient id="binFloor" x1="0" x2="0" y1="0" y2="1"><stop offset="0" stopColor="#8d9295" stopOpacity="0" /><stop offset="1" stopColor="#8d9295" stopOpacity="0.800" /></linearGradient>
    </defs>
    <path d="M0.500 10L12 88Q13.500 99.500 40 99.500T68 88L79.500 10Z" fill="url(#bin)" />
    <path d="M11 80L12 88Q14 98.500 40 98.500T68 88L69 80Z" fill="url(#binFloor)" />
    <ellipse cx="40" cy="10" rx="39" ry="9.300" fill="#5f6566" stroke="#7d8385" strokeWidth="1.200" />
  </svg>
);

const APPS: { name: string; Icon: () => React.JSX.Element; running?: boolean }[] = [
  { name: "finder", Icon: Finder, running: true },
  { name: "launchpad", Icon: Launchpad },
  { name: "safari", Icon: Safari, running: true },
  { name: "chrome", Icon: Chrome },
  { name: "line", Icon: Line },
  { name: "messages", Icon: Messages },
  { name: "mail", Icon: Mail },
  { name: "photos", Icon: Photos },
  { name: "calendar", Icon: Calendar },
  { name: "reminders", Icon: Reminders },
  { name: "music", Icon: Music },
  { name: "store", Icon: AppStore },
  { name: "settings", Icon: Settings },
  { name: "keynote", Icon: Keynote },
  { name: "notes", Icon: Notes },
  { name: "pages", Icon: Pages },
  { name: "numbers", Icon: Numbers },
  { name: "vscode", Icon: VSCode },
  { name: "visualstudio", Icon: VisualStudio },
  { name: "xcode", Icon: Xcode },
  { name: "activity", Icon: Activity },
  { name: "terminal", Icon: Terminal },
];

function Dock() {
  return (
    <div className="absolute left-[101px] top-[1811px] flex h-[144px] w-[2822px] items-center rounded-[44px] border border-[#4c4f52] pl-[6.5px] shadow-[0_0_90px_rgba(0,0,0,0.28),inset_0_0_0_2px_rgba(255,255,255,0.16)] bg-[linear-gradient(180deg,rgba(255,255,255,0)_0%,rgba(255,255,255,0.03)_40%,rgba(255,255,255,0.18)_100%),linear-gradient(90deg,#6b7074_0%,#66706f_11%,#71706e_18%,#73736a_28%,#5f6a6c_35%,#445773_39%,#3f4b66_41.5%,#584f55_43.5%,#74685c_47.500%,#6c625b_54.500%,#524f5a_58.500%,#44546f_61.500%,#3d4d6c_64.500%,#41557a_72%,#5f6c78_74.500%,#707270_78%,#6d6d6f_85%,#66696b_94%,#5e6968_100%)]">
      {APPS.map(({ name, Icon, running }) => (
        <div key={name} className="relative flex h-full w-[119.800px] shrink-0 items-center justify-center pb-[10px]">
          <div className="flex h-[110px] items-center">
            <Icon />
          </div>
          {running && <span className="absolute bottom-[4px] h-2 w-2 rounded-full bg-white" />}
        </div>
      ))}
      <span className="ml-[27px] h-[106px] w-[2px] bg-[#a9acae]" />
      <div className="ml-[43px] pb-[10px]">
        <Trash />
      </div>
    </div>
  );
}

export default function App() {
  return (
    <div className="relative flex h-[1964px] w-[3024px] flex-col overflow-hidden bg-[#c9cbcd]">
      <Wallpaper />
      <MenuBar />
      <section className="relative mt-[4px] flex h-[1734px] w-[3022px] shrink-0 flex-col overflow-hidden rounded-[22px] border border-black bg-white shadow-[0_0_0_1px_#000]">
        <Toolbar />
        <Page />
      </section>
      <Dock />
    </div>
  );
}
